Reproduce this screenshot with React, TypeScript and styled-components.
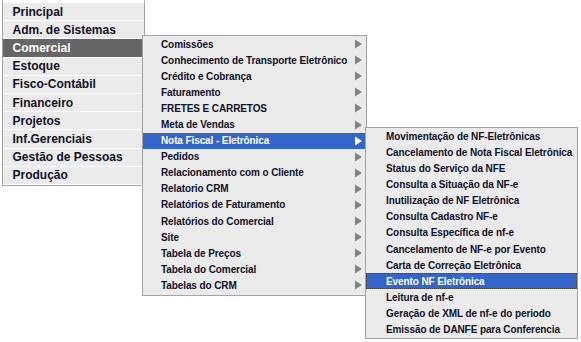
import React from 'react';
import styled, { createGlobalStyle } from 'styled-components';

const Global = createGlobalStyle`
  html, body { margin: 0; padding: 0; background: #ffffff; }
  body { font-family: "Liberation Sans", Arial, sans-serif; }
`;

const Page = styled.div`
  width: 581px;
  height: 342px;
  overflow: hidden;
  padding-left: 2px;
  box-sizing: border-box;
`;

const MainMenu = styled.ul`
  list-style: none;
  margin: 0;
  padding: 2px 0 1px;
  width: 143px;
  box-sizing: border-box;
  border: 1px solid #a3a3a3;
  border-top-color: #ffffff;
  background: #ffffff;
  display: flex;
  flex-direction: column;
  gap: 1px;
`;

const MainItem = styled.li<{ $active?: boolean }>`
  position: relative;
  height: 17.2px;
  display: flex;
  align-items: center;
  padding-left: 9.5px;
  background: ${(p) => (p.$active ? '#666666' : '#ebebeb')};
  color: ${(p) => (p.$active ? '#ffffff' : '#10102a')};
  font-size: 12px;
  font-weight: bold;
  white-space: nowrap;
`;

const SubMenu = styled.ul<{ $top: number; $left: string; $width: number; $padBottom: number }>`
  position: absolute;
  top: ${(p) => p.$top}px;
  left: ${(p) => p.$left};
  width: ${(p) => p.$width}px;
  margin: 0;
  padding: 0 0 ${(p) => p.$padBottom}px;
  list-style: none;
  box-sizing: border-box;
  border: 1px solid #a3a3a3;
  background: #ebebeb;
  z-index: 1;
`;

const SubItem = styled.li<{ $active?: boolean; $focus?: boolean; $pad: number; $h: number }>`
  position: relative;
  height: ${(p) => p.$h}px;
  display: flex;
  align-items: center;
  padding: 0 4.5px 0 ${(p) => p.$pad}px;
  background: ${(p) => (p.$active ? '#3366c8' : 'transparent')};
  color: ${(p) => (p.$active ? '#ffffff' : '#10102a')};
  outline: ${(p) => (p.$focus ? '1px dotted #444444' : 'none')};
  outline-offset: -1px;
  font-size: 10px;
  font-weight: bold;
  letter-spacing: -0.1px;
  white-space: nowrap;
`;

const Label = styled.span`
  flex: 1;
`;

const ArrowIcon = styled.svg`
  flex: none;
  display: block;
`;

const Arrow: React.FC<{ light?: boolean }> = ({ light }) => (
  <ArrowIcon width="7" height="10" viewBox="0 0 7 10">
    <polygon points="0,0.5 7,5 0,9.5" fill={light ? '#ffffff' : '#858585'} />
  </ArrowIcon>
);

const mainItems = [
  'Principal',
  'Adm. de Sistemas',
  'Comercial',
  'Estoque',
  'Fisco-Contábil',
  'Financeiro',
  'Projetos',
  'Inf.Gerenciais',
  'Gestão de Pessoas',
  'Produção',
];

const comercialItems = [
  'Comissões',
  'Conhecimento de Transporte Eletrônico',
  'Crédito e Cobrança',
  'Faturamento',
  'FRETES E CARRETOS',
  'Meta de Vendas',
  'Nota Fiscal - Eletrônica',
  'Pedidos',
  'Relacionamento com o Cliente',
  'Relatorio CRM',
  'Relatórios de Faturamento',
  'Relatórios do Comercial',
  'Site',
  'Tabela de Preços',
  'Tabela do Comercial',
  'Tabelas do CRM',
];

const nfeItems = [
  'Movimentação de NF-Eletrônicas',
  'Cancelamento de Nota Fiscal Eletrônica',
  'Status do Serviço da NFE',
  'Consulta a Situação da NF-e',
  'Inutilização de NF Eletrônica',
  'Consulta Cadastro NF-e',
  'Consulta Específica de nf-e',
  'Cancelamento de NF-e por Evento',
  'Carta de Correção Eletrônica',
  'Evento NF Eletrônica',
  'Leitura de nf-e',
  'Geração de XML de nf-e do periodo',
  'Emissão de DANFE para Conferencia',
];

const NfeMenu = () => (
  <SubMenu $top={-5.6} $left="calc(100% - 1px)" $width={213} $padBottom={0}>
    {nfeItems.map((t) => {
      const active = t === 'Evento NF Eletrônica';
      return (
        <SubItem key={t} $pad={20} $h={16.15} $active={active} $focus={active}>
          <Label>{t}</Label>
        </SubItem>
      );
    })}
  </SubMenu>
);

const ComercialMenu = () => (
  <SubMenu $top={-4.4} $left="calc(100% - 2px)" $width={225} $padBottom={2}>
    {comercialItems.map((t) => {
      const active = t === 'Nota Fiscal - Eletrônica';
      return (
        <SubItem key={t} $pad={18} $h={16.1} $active={active}>
          <Label>{t}</Label>
          <Arrow light={active} />
          {active && <NfeMenu />}
        </SubItem>
      );
    })}
  </SubMenu>
);

export default function App() {
  return (
    <Page>
      <Global />
      <MainMenu>
        {mainItems.map((t) => {
          const active = t === 'Comercial';
          return (
            <MainItem key={t} $active={active}>
              {t}
              {active && <ComercialMenu />}
            </MainItem>
          );
        })}
      </MainMenu>
    </Page>
  );
}
